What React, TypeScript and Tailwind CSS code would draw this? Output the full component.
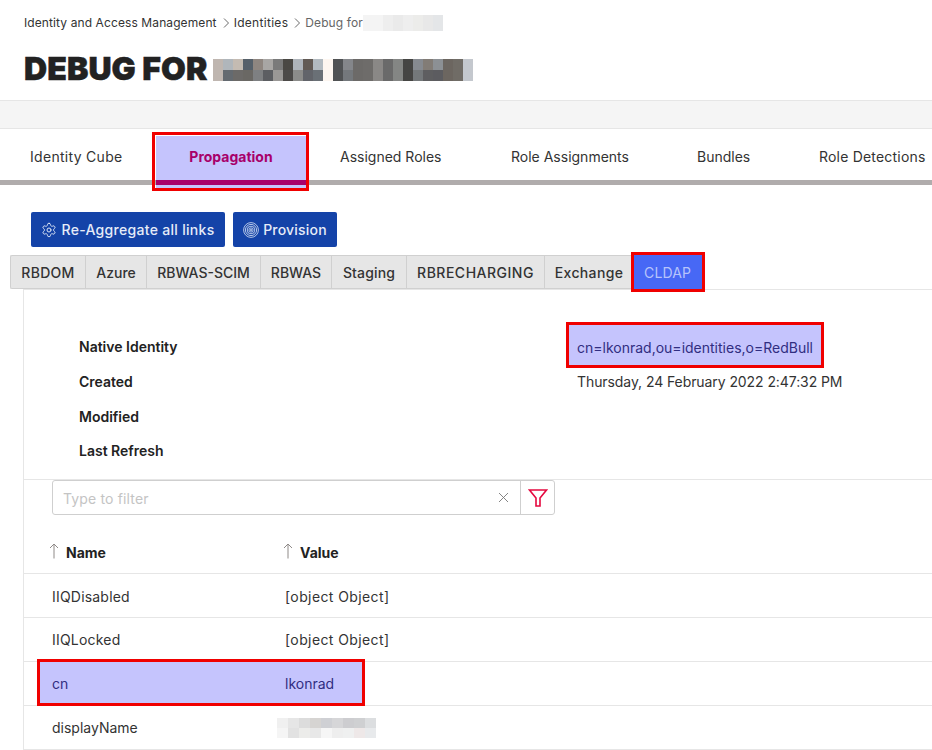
import React from "react";

const titleTop = ["#bfb6b0","#b0b6bb","#c4bbb2","#56606a","#8f8680","#a8a6a4","#7a7a7a","#4a4844","#aeb4ba","#625a54","#b2bac0","#fdf6f0","#505254","#84868a","#6c6a68","#6e6c6a","#8a8886","#6a6a6a","#848684","#454543","#868a90","#827c76","#8c9094","#6c6660","#706c66","#c4c8ce"];
const titleBottom = ["#bfb6b0","#646a70","#6c6a68","#6a6864","#7e8082","#5c5e62","#9a9896","#4c4a48","#8c8c8a","#62646a","#6a7076","#fdf6f0","#505254","#74787c","#6c6a68","#6e6c6a","#8a8886","#6a6a6a","#848684","#454543","#74787a","#5e5e60","#5c5c60","#6c6660","#706c66","#c4c8ce"];
const crumb = ["#f4f4f4","#f4f4f4","#eeeeee","#eaeaea","#eeeeee","#ececea","#e8e8e8","#e4e6e8"];
const nameTop = ["#f0f0f0","#e6e6e6","#dcdcdc","#d6d4d2","#cfd0d4","#d6d6d8","#cdcdd0","#cfd0d2","#dcdee0"];
const nameBottom = ["#f5f5f5","#e2e2e2","#ececea","#e8e8e8","#f6f6f6","#eeeeee","#eff0f0","#eee8e8","#e8eaec"];

function Pixels({ rows, w, h, className }: { rows: string[][]; w: number; h: number; className?: string }) {
  return (
    <svg width={Math.max(...rows.map((r) => r.length)) * w} height={rows.length * h} className={className} shapeRendering="crispEdges" aria-hidden="true">
      {rows.map((r, y) => r.map((c, x) => <rect key={`${x}-${y}`} x={x * w} y={y * h} width={w} height={h} fill={c} />))}
    </svg>
  );
}

const Chevron = () => (
  <svg width="7" height="10" viewBox="0 0 7 10" fill="none" stroke="#6b6b6b" strokeWidth="1" className="ml-[6px] mr-[4px]">
    <path d="M1 0.5 L5.5 5 L1 9.5" />
  </svg>
);

const Gear = () => (
  <svg width="16" height="16" viewBox="0 0 24 24" fill="none" stroke="#dbe4f5" strokeWidth="1.5" strokeLinecap="round" strokeLinejoin="round">
    <path d="M12.22 2h-.44a2 2 0 0 0-2 2v.18a2 2 0 0 1-1 1.73l-.43.25a2 2 0 0 1-2 0l-.15-.08a2 2 0 0 0-2.73.73l-.22.38a2 2 0 0 0 .73 2.73l.15.1a2 2 0 0 1 1 1.72v.51a2 2 0 0 1-1 1.74l-.15.09a2 2 0 0 0-.73 2.73l.22.38a2 2 0 0 0 2.73.73l.15-.08a2 2 0 0 1 2 0l.43.25a2 2 0 0 1 1 1.73V20a2 2 0 0 0 2 2h.44a2 2 0 0 0 2-2v-.18a2 2 0 0 1 1-1.73l.43-.25a2 2 0 0 1 2 0l.15.08a2 2 0 0 0 2.73-.73l.22-.39a2 2 0 0 0-.73-2.73l-.15-.08a2 2 0 0 1-1-1.74v-.5a2 2 0 0 1 1-1.74l.15-.09a2 2 0 0 0 .73-2.73l-.22-.38a2 2 0 0 0-2.73-.73l-.15.08a2 2 0 0 1-2 0l-.43-.25a2 2 0 0 1-1-1.73V4a2 2 0 0 0-2-2z" />
    <circle cx="12" cy="12" r="3" />
  </svg>
);

const Rings = () => (
  <svg width="16" height="16" viewBox="0 0 16 16" fill="none" stroke="#dbe4f5" strokeWidth="0.8">
    <circle cx="8" cy="8" r="7.4" />
    <circle cx="8" cy="8" r="5.6" />
    <circle cx="8" cy="8" r="3.8" />
    <circle cx="8" cy="8" r="2.1" />
    <circle cx="8" cy="8" r="0.7" />
  </svg>
);

const ArrowUp = () => (
  <svg width="12" height="16" viewBox="0 0 12 16" fill="none" stroke="#8f8a88" strokeWidth="1" className="-mt-[3px]">
    <path d="M6 15.5 V1 M2 5 L6 1 L10 5" />
  </svg>
);

const subTabs = [
  { t: "RBDOM", w: "w-[75px]", s: "tracking-[0.3px]" },
  { t: "Azure", w: "w-[61px]", s: "" },
  { t: "RBWAS-SCIM", w: "w-[114px]", s: "" },
  { t: "RBWAS", w: "w-[71px]", s: "" },
  { t: "Staging", w: "w-[75px]", s: "tracking-[0.15px]" },
  { t: "RBRECHARGING", w: "w-[138px]", s: "tracking-[0.5px]" },
  { t: "Exchange", w: "w-[88px]", s: "tracking-[0.35px]" },
];

const info = ["Native Identity", "Created", "Modified", "Last Refresh"];

export default function App() {
  return (
    <div className="w-[932px] h-[750px] overflow-hidden bg-white text-[#222] font-['Inter','Liberation_Sans',sans-serif]">
      <div className="h-[44px] pl-6 flex items-center text-[12px] text-[#333] pt-[1px] tracking-[0.1px]">
        <span>Identity and Access Management</span>
        <Chevron />
        <span className="tracking-[0.3px]">Identities</span>
        <Chevron />
        <span className="text-[#666] tracking-[0.1px]">Debug for</span>
        <Pixels rows={[crumb]} w={10} h={16} />
      </div>
      <div className="h-[56px] pl-6 flex items-center gap-[5px] pb-[6px]">
        <h1 className="text-[32px] leading-none font-black tracking-[0.1px] text-[#222] [-webkit-text-stroke:0.5px_#222]">DEBUG FOR</h1>
        <Pixels rows={[titleTop, titleBottom]} w={10} h={11} className="mt-[2px]" />
      </div>
      <div className="h-[29px] bg-[#f5f5f5] border-y border-[#e6e6e6]" />

      <div className="flex h-[56px] border-b-[5px] border-[#b0acac] whitespace-nowrap text-[14px] text-[#333]">
        <div className="w-[156px] flex items-center pl-[30px] pt-[3px] tracking-[0.3px]">Identity Cube</div>
        <div className="relative w-[150px] h-[52px] mt-[7px] shrink-0 bg-[#c5c4fd] flex justify-center pt-[10px] font-bold text-[#a8006a]">
          Propagation
          <div className="absolute left-0 right-0 top-[44px] h-[5px] bg-[#a8006a]" />
          <div className="absolute left-[-4px] right-[-3px] top-[-4px] bottom-[-3px] border-[3px] border-[#f00000]" />
        </div>
        <div className="w-[174px] flex items-center pl-[34px] pt-[3px]">Assigned Roles</div>
        <div className="w-[186px] flex items-center pl-[31px] pt-[3px]">Role Assignments</div>
        <div className="w-[122px] flex items-center pl-[31px] pt-[3px]">Bundles</div>
        <div className="flex items-center pl-[31px] pt-[3px] tracking-[0.2px]">Role Detections</div>
      </div>

      <div className="flex gap-2 pl-[31px] pt-[27px] text-[14px]">
        <button className="w-[194px] h-[35px] rounded-[2px] bg-[#1443a8] flex items-center justify-center gap-[4px] text-[#e6ecf8] font-medium tracking-[0.3px]"><Gear />Re-Aggregate all links</button>
        <button className="w-[104px] h-[35px] rounded-[2px] bg-[#1443a8] flex items-center justify-center gap-[4px] text-[#e6ecf8] font-medium tracking-[0.2px]"><Rings />Provision</button>
      </div>

      <div className="flex ml-[10px] mt-[8px] h-[34px] text-[14px] font-medium text-[#333]">
        <div className="flex bg-[#e6e6e6] border border-[#d0d0d0] rounded-l-[2px] border-r-0">
          {subTabs.map((s, i) => (
            <div key={s.t} className={`${s.w} ${s.s} flex items-center justify-center ${i < subTabs.length - 1 ? "border-r border-[#d0d0d0]" : ""}`}>{s.t}</div>
          ))}
        </div>
        <div className="relative w-[69px] bg-[#4768f5] text-[#b7c4fb] flex items-center justify-center font-normal tracking-[0.1px]">
          CLDAP
          <div className="absolute left-[-2px] right-[-3px] top-[-3px] bottom-[-3px] border-[3px] border-[#f00000]" />
        </div>
      </div>

      <div className="ml-[23px] border-l border-t border-[#e6e6e6] h-[462px] text-[14px]">
        <div className="h-[189px] pl-[55px] pt-[46px] relative">
          {info.map((t) => (
            <div key={t} className="h-[34.8px] font-semibold text-[#222]">{t}</div>
          ))}
          <div className="absolute left-[553px] top-[81px] text-[#333] whitespace-nowrap tracking-[-0.08px]">Thursday, 24 February 2022 2:47:32 PM</div>
          <div className="absolute left-[542px] top-[32px] w-[258px] h-[46px] bg-[#c5c4fd] border-[3px] border-[#f00000] text-[#312e81] flex items-center pl-[8px] pt-[4px] whitespace-nowrap">cn=lkonrad,ou=identities,o=RedBull</div>
        </div>
        <div className="border-t border-[#e6e6e6] pl-[28px] h-[36px]">
          <div className="flex w-[503px] h-[35px] border border-[#cfcfcf] rounded-[3px]">
            <div className="flex-1 pl-[10px] pt-[1px] flex items-center text-[#c4c4c4] tracking-[0.15px]">Type to filter</div>
            <div className="w-[34px] flex items-center justify-center">
              <svg width="11" height="11" viewBox="0 0 11 11" stroke="#777" strokeWidth="0.9" fill="none"><path d="M1 1 L10 10 M10 1 L1 10" /></svg>
            </div>
            <div className="w-[34px] border-l border-[#cfcfcf] flex items-center justify-center">
              <svg width="20" height="20" viewBox="0 0 20 20" fill="none" stroke="#e5083f" strokeWidth="1.6" strokeLinejoin="miter"><path d="M1.5 2 H18.5 L12 10 V18 L8 18 V10 Z" /></svg>
            </div>
          </div>
        </div>
        <div className="h-[59px] flex border-b border-[#e6e6e6] font-bold text-[#222] items-center pt-[16px]">
          <div className="w-[258px] pl-[24px] flex items-center gap-[6px]"><ArrowUp />Name</div>
          <div className="flex items-center gap-[6px]"><ArrowUp />Value</div>
        </div>
        <div className="h-[44px] flex items-center border-b border-[#e6e6e6] text-[#333] pl-[28px] pt-[1px]">
          <div className="w-[233px] tracking-[0.2px]">IIQDisabled</div>
          <div className="tracking-[0.4px]">[object Object]</div>
        </div>
        <div className="h-[44px] flex items-center border-b border-[#e6e6e6] text-[#333] pl-[28px]">
          <div className="w-[233px] tracking-[0.2px]">IIQLocked</div>
          <div className="tracking-[0.4px]">[object Object]</div>
        </div>
        <div className="relative h-[44px] flex items-center border-b border-[#e6e6e6] pl-[28px]">
          <div className="absolute left-[13px] top-[-3px] w-[328px] h-[47px] bg-[#c5c4fd] border-[3px] border-[#f00000]" />
          <div className="relative w-[233px] text-[#312e81]">cn</div>
          <div className="relative text-[#312e81]">lkonrad</div>
        </div>
        <div className="h-[44px] flex items-center border-b border-[#e6e6e6] text-[#333] pl-[28px]">
          <div className="w-[225px]">displayName</div>
          <Pixels rows={[nameTop, nameBottom]} w={11} h={10} />
        </div>
      </div>
    </div>
  );
}
